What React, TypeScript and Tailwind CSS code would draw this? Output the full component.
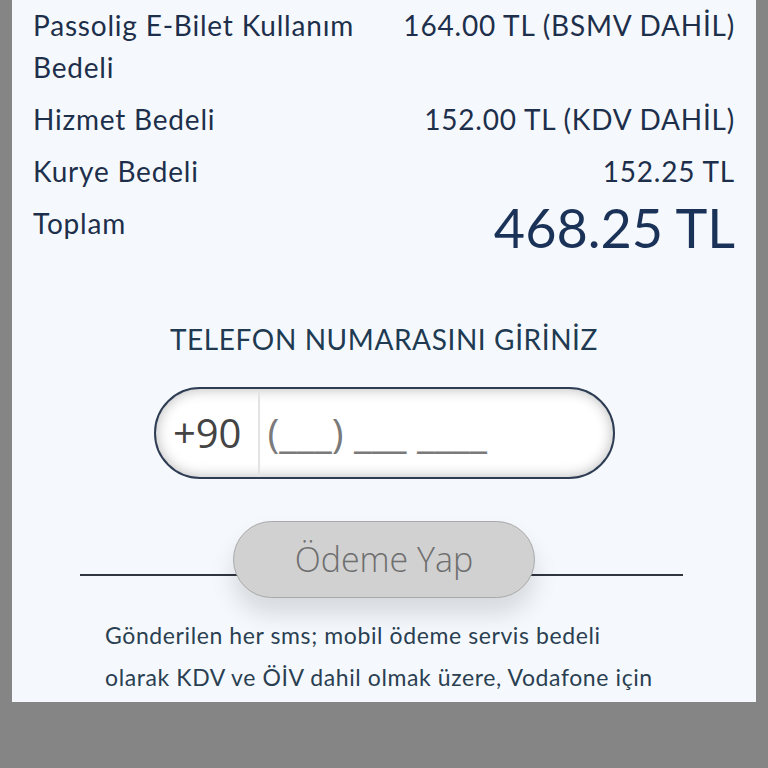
const rows = [
  { label: 'Passolig E-Bilet Kullanım Bedeli', value: '164.00 TL (BSMV DAHİL)' },
  { label: 'Hizmet Bedeli', value: '152.00 TL (KDV DAHİL)' },
  { label: 'Kurye Bedeli', value: '152.25 TL' },
];

export default function App() {
  return (
    <div className="h-[768px] bg-[#858585] px-[12px] font-['Lato',sans-serif]">
      <div className="h-[702px] overflow-hidden bg-[#f5f9fd] px-[21px] pt-[4px]">
        {rows.map((row) => (
          <div
            key={row.label}
            className="flex justify-between mb-[10px] text-[28px] leading-[42px] tracking-[0.8px] text-[#1d2f4b]"
          >
            <span className="w-[345px]">{row.label}</span>
            <span className="whitespace-nowrap text-right">{row.value}</span>
          </div>
        ))}
        <div className="flex justify-between text-[#1d2f4b]">
          <span className="text-[28px] leading-[42px] tracking-[0.8px]">Toplam</span>
          <span className="text-[54px] leading-[54px] -mt-[1px] text-[#1b3258]">468.25 TL</span>
        </div>

        <h2 className="mt-[64px] text-center text-[28px] leading-[40px] tracking-[0.6px] text-[#203a52]">
          TELEFON NUMARASINI GİRİNİZ
        </h2>

        <div className="mx-auto mt-[28px] flex h-[92px] w-[461px] items-stretch overflow-hidden rounded-full border-2 border-[#2e3d54] bg-white shadow-[inset_0_0_14px_rgba(0,0,0,0.28)] font-['Open_Sans',sans-serif]">
          <div className="flex w-[104px] items-center justify-end border-r-2 border-[#e3e3e3] pr-[16px] text-[40px] text-[#444]">
            +90
          </div>
          <div className="flex items-center pl-[8px] text-[40px] text-[#7a7a7a]">(___) ___ ____</div>
        </div>

        <div className="relative mt-[41px] flex h-[78px] items-center justify-center">
          <div className="absolute left-[47px] right-[52px] top-[54px] h-[1.5px] bg-[#2f3640]" />
          <button className="relative h-[77px] w-[302px] rounded-full border border-[#a9a9a9] bg-[#d1d1d1] text-[34px] font-light text-[#6e6e6e] shadow-[0_16px_24px_rgba(0,0,0,0.13)] font-['Open_Sans',sans-serif]">
            Ödeme Yap
          </button>
        </div>

        <p className="mt-[16px] pl-[72px] text-[23px] leading-[42px] tracking-[0.6px] text-[#2b3f52]">
          <span className="block">Gönderilen her sms; mobil ödeme servis bedeli</span>
          <span className="block">olarak KDV ve ÖİV dahil olmak üzere, Vodafone için</span>
        </p>
      </div>
    </div>
  );
}
